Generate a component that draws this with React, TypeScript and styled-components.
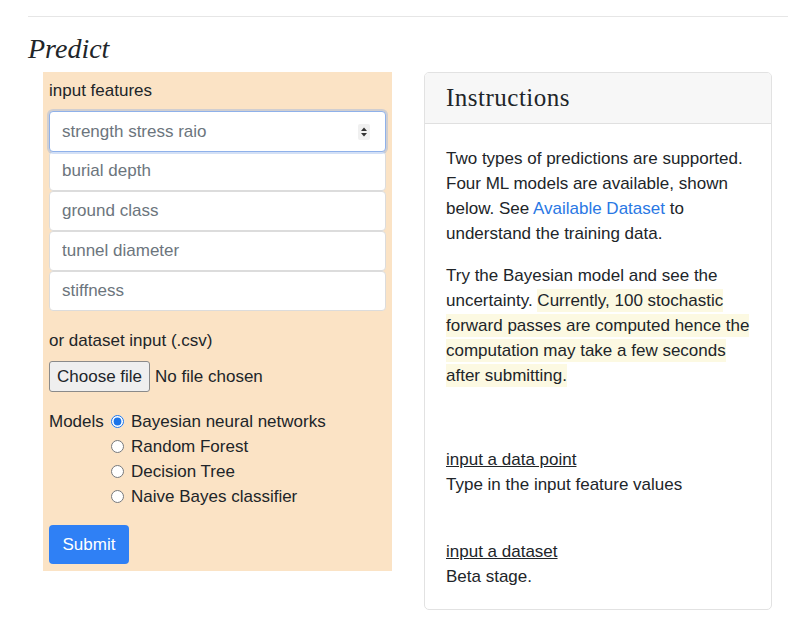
import React from "react";
import styled, { createGlobalStyle } from "styled-components";

const Global = createGlobalStyle`
  html, body { margin: 0; padding: 0; background: #ffffff; }
  body { font-family: "Liberation Sans", Arial, sans-serif; color: #212529; font-size: 17px; }
  * { box-sizing: border-box; }
`;

const Page = styled.div`
  padding: 16px 12px 0 28px;
`;

const Rule = styled.hr`
  margin: 0;
  border: 0;
  border-top: 1px solid #e6e6e6;
  width: 760px;
`;

const Title = styled.h2`
  margin: 17px 0 8px 0;
  font-family: "Liberation Serif", "Times New Roman", serif;
  font-style: italic;
  font-weight: 400;
  font-size: 28px;
  line-height: 30px;
  color: #212529;
`;

const Columns = styled.div`
  display: flex;
  align-items: flex-start;
  gap: 32px;
  padding-left: 15px;
`;

const FormPanel = styled.form`
  width: 349px;
  background: #fbe3c5;
  padding: 7px 6px 7px 6px;
  display: flex;
  flex-direction: column;
`;

const Label = styled.div<{ $mt?: number }>`
  line-height: 24px;
  margin-top: ${(p) => p.$mt ?? 0}px;
`;

const InputStack = styled.div`
  margin-top: 8px;
  display: flex;
  flex-direction: column;
`;

const Field = styled.div`
  position: relative;
`;

const TextInput = styled.input<{ $focus?: boolean }>`
  display: block;
  width: 100%;
  height: ${(p) => (p.$focus ? 41 : 40)}px;
  margin-top: ${(p) => (p.$focus ? 0 : -1)}px;
  padding: 0 12px;
  font-family: "Liberation Sans", Arial, sans-serif;
  font-size: 17px;
  color: #212529;
  background: #ffffff;
  border: 1px solid ${(p) => (p.$focus ? "#8fb1ea" : "#dcdcdc")};
  border-radius: 4px;
  outline: none;
  box-shadow: ${(p) => (p.$focus ? "0 0 0 2px rgba(130,165,230,0.35)" : "none")};
  position: relative;
  z-index: ${(p) => (p.$focus ? 1 : 0)};
  &::placeholder { color: #6c757d; }
  & + & { margin-top: 0; }
`;

const Spinner = styled.div`
  position: absolute;
  right: 16px;
  top: 13px;
  width: 12px;
  height: 16px;
  background: #f0f0f0;
  border-radius: 2px;
  z-index: 2;
  display: flex;
  align-items: center;
  justify-content: center;
`;

const FileRow = styled.div`
  margin-top: 8px;
  display: flex;
  align-items: center;
  gap: 5px;
`;

const FileButton = styled.span`
  display: inline-flex;
  align-items: center;
  height: 31px;
  padding: 0 7px;
  background: #efefef;
  border: 1px solid #8a8a8a;
  border-radius: 3px;
  line-height: 1;
`;

const ModelsRow = styled.div`
  margin-top: 17px;
  display: flex;
  align-items: flex-start;
`;

const ModelsLabel = styled.span`
  line-height: 25px;
  width: 62px;
`;

const RadioList = styled.div`
  display: flex;
  flex-direction: column;
`;

const RadioItem = styled.label`
  display: flex;
  align-items: center;
  height: 25px;
  gap: 7px;
`;

const Radio = styled.input`
  margin: 0;
  width: 13px;
  height: 13px;
  accent-color: #1a73e8;
`;

const SubmitButton = styled.button`
  margin-top: 16px;
  width: 80px;
  height: 39px;
  background: #2f80f5;
  color: #ffffff;
  border: 0;
  border-radius: 4px;
  font-family: "Liberation Sans", Arial, sans-serif;
  font-size: 17px;
`;

const Card = styled.div`
  width: 348px;
  border: 1px solid #e2e2e2;
  border-radius: 5px;
  background: #ffffff;
  overflow: hidden;
`;

const CardHeader = styled.div`
  height: 51px;
  background: #f7f7f7;
  border-bottom: 1px solid #e0e0e0;
  padding: 11px 21px 0 21px;
  font-family: "Liberation Serif", "Times New Roman", serif;
  font-size: 25px;
  letter-spacing: 0.5px;
  line-height: 28px;
  color: #212529;
`;

const CardBody = styled.div`
  padding: 22px 18px 20px 21px;
`;

const Para = styled.p<{ $mt?: number }>`
  margin: ${(p) => p.$mt ?? 0}px 0 0 0;
  line-height: 25px;
`;

const Link = styled.a`
  color: #2a78e4;
  text-decoration: none;
`;

const Mark = styled.span`
  background: #fcf9e2;
  padding: 2px 0;
`;

const Under = styled.span`
  text-decoration: underline;
`;

const models = [
  "Bayesian neural networks",
  "Random Forest",
  "Decision Tree",
  "Naive Bayes classifier",
];

const fields = ["burial depth", "ground class", "tunnel diameter", "stiffness"];

export default function App() {
  return (
    <>
      <Global />
      <Page>
        <Rule />
        <Title>Predict</Title>
        <Columns>
          <FormPanel onSubmit={(e) => e.preventDefault()}>
            <Label>input features</Label>
            <InputStack>
              <Field>
                <TextInput $focus placeholder="strength stress raio" />
                <Spinner>
                  <svg width="8" height="12" viewBox="0 0 8 12">
                    <path d="M1 5 L4 1.5 L7 5 Z" fill="#333" />
                    <path d="M1 7 L4 10.5 L7 7 Z" fill="#333" />
                  </svg>
                </Spinner>
              </Field>
              {fields.map((f) => (
                <TextInput key={f} placeholder={f} />
              ))}
            </InputStack>
            <Label $mt={18}>or dataset input (.csv)</Label>
            <FileRow>
              <FileButton>Choose file</FileButton>
              <span>No file chosen</span>
            </FileRow>
            <ModelsRow>
              <ModelsLabel>Models</ModelsLabel>
              <RadioList>
                {models.map((m, i) => (
                  <RadioItem key={m}>
                    <Radio type="radio" name="model" defaultChecked={i === 0} />
                    {m}
                  </RadioItem>
                ))}
              </RadioList>
            </ModelsRow>
            <SubmitButton type="submit">Submit</SubmitButton>
          </FormPanel>
          <Card>
            <CardHeader>Instructions</CardHeader>
            <CardBody>
              <Para>
                Two types of predictions are supported. Four ML models are
                available, shown below. See <Link href="#">Available Dataset</Link>{" "}
                to understand the training data.
              </Para>
              <Para $mt={17}>
                Try the Bayesian model and see the uncertainty.{" "}
                <Mark>
                  Currently, 100 stochastic forward passes are computed hence the
                  computation may take a few seconds after submitting.
                </Mark>
              </Para>
              <Para $mt={59}>
                <Under>input a data point</Under>
                <br />
                Type in the input feature values
              </Para>
              <Para $mt={42}>
                <Under>input a dataset</Under>
                <br />
                Beta stage.
              </Para>
            </CardBody>
          </Card>
        </Columns>
      </Page>
    </>
  );
}
